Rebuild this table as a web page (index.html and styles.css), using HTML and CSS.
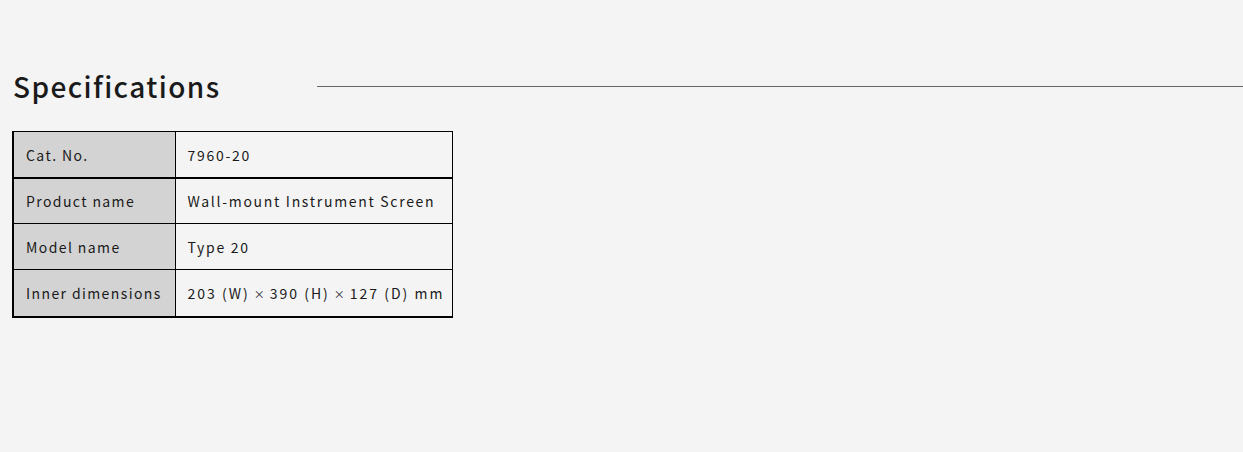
FILE: index.html
```html
<!DOCTYPE html>
<html>
<head>
<meta charset="utf-8">
<link rel="stylesheet" href="styles.css">
</head>
<body>
<section class="specs">
  <div class="head">
    <h2 class="title">Specifications</h2>
    <div class="rule"></div>
  </div>
  <table class="spec-table">
    <tr class="first"><th>Cat. No.</th><td>7960-20</td></tr>
    <tr><th>Product name</th><td>Wall-mount Instrument Screen</td></tr>
    <tr><th>Model name</th><td>Type 20</td></tr>
    <tr class="last"><th>Inner dimensions</th><td>203 (W)<span class="x">×</span>390 (H)<span class="x">×</span>127 (D) mm</td></tr>
  </table>
</section>
</body>
</html>
```
FILE: styles.css
```css
html, body {
  margin: 0;
  padding: 0;
  background: #f4f4f4;
}
body {
  font-family: "Noto Sans CJK JP", "DejaVu Sans", sans-serif;
  color: #1a1a1a;
}
.specs {
  padding: 66px 0 0 12px;
}
.head {
  display: flex;
  align-items: center;
}
.title {
  margin: 0;
  width: 305px;
  flex: none;
  font-size: 28px;
  font-weight: 500;
  letter-spacing: 1.4px;
  line-height: 40px;
  padding-left: 1px;
  box-sizing: border-box;
}
.rule {
  flex: 1;
  height: 1px;
  background: #666;
}
.spec-table {
  margin-top: 25px;
  border-collapse: collapse;
  border-top: 1px solid #000;
  border-right: 1px solid #000;
  border-left: 2px solid #000;
  border-bottom: 2px solid #000;
}
.spec-table th,
.spec-table td {
  height: 46px;
  padding: 1px 0 0 12px;
  font-size: 14px;
  font-weight: 400;
  text-align: left;
  border-bottom: 1px solid #000;
  box-sizing: border-box;
  white-space: nowrap;
}
.spec-table th {
  width: 162px;
  background: #d3d3d3;
  border-right: 1px solid #000;
  letter-spacing: 1.4px;
}
.spec-table td {
  width: 277px;
  background: #f4f4f4;
  letter-spacing: 1.7px;
}
.spec-table tr.first th,
.spec-table tr.first td {
  border-bottom: 2px solid #000;
}
.spec-table tr.last th,
.spec-table tr.last td {
  height: 47px;
}
.spec-table tr.last td {
  letter-spacing: 2px;
}
.x {
  font-size: 11px;
  letter-spacing: 0;
  padding: 0 5px 0 4px;
}
```
